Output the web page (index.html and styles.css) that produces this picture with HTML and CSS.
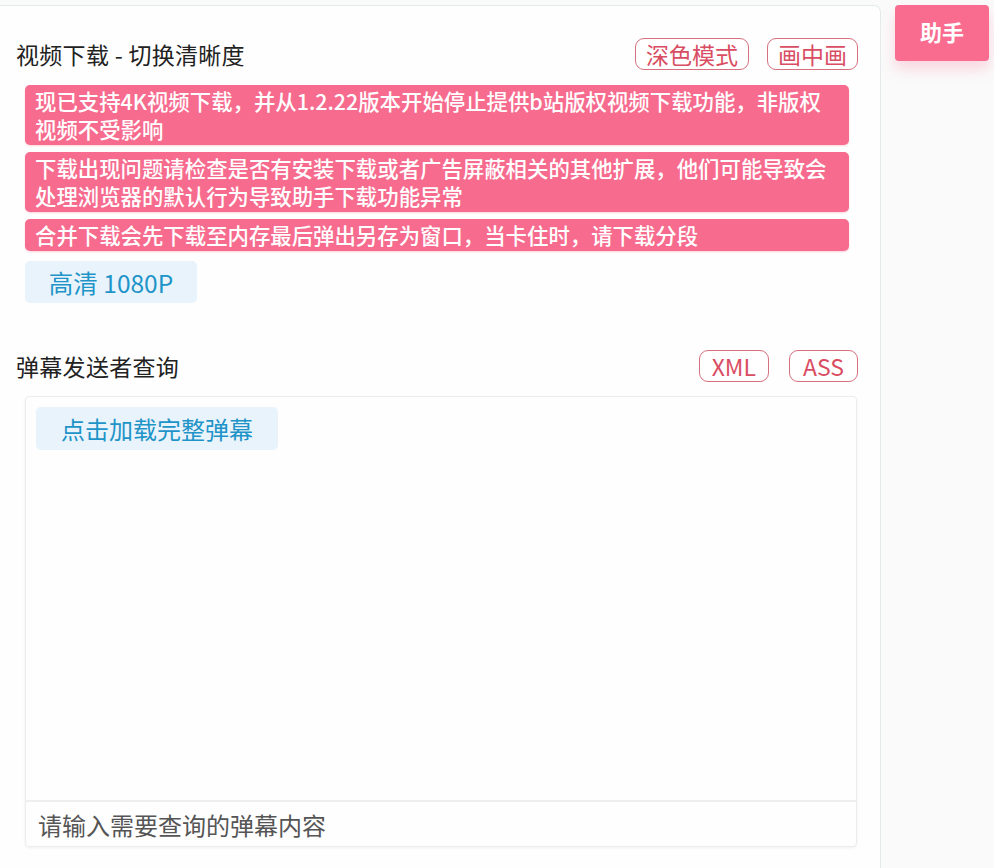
FILE: index.html
```html
<!DOCTYPE html>
<html lang="zh-CN">
<head>
    <meta charset="UTF-8">
    <meta name="viewport" content="width=device-width, initial-scale=1.0">
    <title>助手</title>
    <link rel="stylesheet" href="styles.css">
</head>
<body>
    <div class="page">
        <div class="panel">
            <div class="section-head">
                <span class="section-title">视频下载 - 切换清晰度</span>
                <div class="head-actions">
                    <button class="tag-btn">深色模式</button>
                    <button class="tag-btn">画中画</button>
                </div>
            </div>

            <div class="notices">
                <div class="notice">现已支持4K视频下载，并从1.2.22版本开始停止提供b站版权视频下载功能，非版权视频不受影响</div>
                <div class="notice">下载出现问题请检查是否有安装下载或者广告屏蔽相关的其他扩展，他们可能导致会处理浏览器的默认行为导致助手下载功能异常</div>
                <div class="notice">合并下载会先下载至内存最后弹出另存为窗口，当卡住时，请下载分段</div>
            </div>

            <button class="soft-btn quality-btn">高清 1080P</button>

            <div class="section-head second">
                <span class="section-title">弹幕发送者查询</span>
                <div class="head-actions wide">
                    <button class="tag-btn">XML</button>
                    <button class="tag-btn">ASS</button>
                </div>
            </div>

            <div class="danmaku-box">
                <div class="danmaku-list">
                    <button class="soft-btn load-btn">点击加载完整弹幕</button>
                </div>
                <input type="text" class="danmaku-input" placeholder="请输入需要查询的弹幕内容">
            </div>
        </div>

        <button class="helper-btn">助手</button>
    </div>
</body>
</html>
```

FILE: styles.css
```css
body {
    margin: 0;
    background-color: #fafafa;
    font-family: "Noto Sans CJK SC", "Noto Sans", sans-serif;
    color: #222;
    overflow: hidden;
}

.page {
    display: flex;
    align-items: flex-start;
}

.panel {
    width: 881px;
    height: 900px;
    margin-top: 5px;
    padding-top: 30px;
    box-sizing: border-box;
    background-color: #fefefe;
    border: 1px solid #e4eaec;
    border-left: none;
    border-radius: 0 7px 7px 0;
}

.section-head {
    display: flex;
    align-items: center;
    justify-content: space-between;
    padding: 0 22px 0 16px;
    height: 35px;
}

.section-head.second {
    margin-top: 46px;
    height: 33px;
}

.section-title {
    font-size: 23px;
    letter-spacing: 0.3px;
    color: #222;
}

.head-actions {
    display: flex;
    gap: 18px;
}

.head-actions.wide {
    gap: 20px;
}

.tag-btn {
    font-family: inherit;
    font-size: 23px;
    line-height: 30px;
    padding: 0 10px;
    background: #fff;
    color: #d94d63;
    border: 1.5px solid #d6707e;
    border-radius: 9px;
    cursor: pointer;
}

.head-actions.wide .tag-btn {
    padding: 0 12px;
    min-width: 69px;
}

.notices {
    display: flex;
    flex-direction: column;
    gap: 7px;
    margin: 14px 31px 0 25px;
}

.notice {
    padding: 2px 10px;
    background-color: #f76b8e;
    color: #fff;
    font-size: 21.4px;
    font-weight: 500;
    line-height: 28px;
    border-radius: 5px;
    box-shadow: 0 1px 2px rgba(240, 90, 120, 0.25);
}

.soft-btn {
    font-family: inherit;
    background-color: #e9f3fb;
    color: #1e94c8;
    border: none;
    border-radius: 5px;
    cursor: pointer;
}

.quality-btn {
    display: block;
    margin: 10px 0 0 25px;
    width: 172px;
    height: 42px;
    font-size: 24.5px;
}

.danmaku-box {
    margin: 14px 23px 0 25px;
    height: 451px;
    display: flex;
    flex-direction: column;
    border: 1px solid #ececec;
    border-radius: 4px;
    box-shadow: 0 1px 3px rgba(0, 0, 0, 0.06);
    box-sizing: border-box;
}

.danmaku-list {
    flex: 1;
    padding: 10px 10px;
}

.load-btn {
    width: 242px;
    height: 43px;
    font-size: 24px;
}

.danmaku-input {
    height: 44px;
    padding: 0 12px;
    border: none;
    border-top: 2px solid #efefef;
    background: transparent;
    font-family: inherit;
    font-size: 24px;
    outline: none;
}

.danmaku-input::placeholder {
    color: #555;
}

.helper-btn {
    margin: 5px 0 0 14px;
    width: 94px;
    height: 56px;
    background-color: #f96b8f;
    color: #fff;
    font-family: inherit;
    font-size: 22px;
    font-weight: bold;
    border: none;
    border-radius: 4px;
    box-shadow: 0 8px 14px rgba(249, 107, 143, 0.25);
    padding-bottom: 6px;
}
```
